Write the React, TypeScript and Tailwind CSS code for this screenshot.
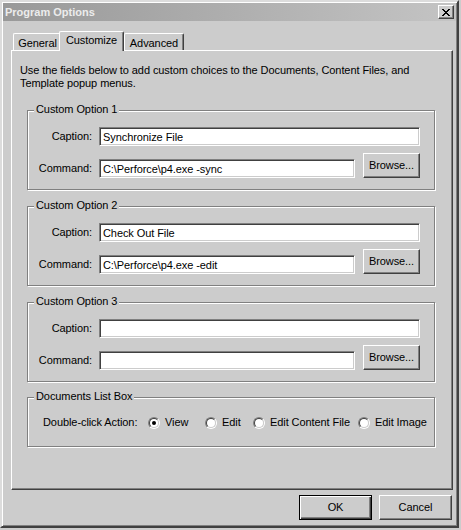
import type { ReactNode } from 'react';

// Win2k 3D edges, grayscale
const raised = 'border border-t-white border-l-white border-r-[#404040] border-b-[#404040] shadow-[inset_-1px_-1px_0_#808080]';
const sunken = 'border border-t-[#808080] border-l-[#808080] border-r-white border-b-white shadow-[inset_1px_1px_0_#404040,inset_-1px_-1px_0_#cccccc]';

function Field({ width, value = '' }: { width: string; value?: string }) {
  return (
    <input
      readOnly
      defaultValue={value}
      className={`${width} h-[19px] ${sunken} bg-white pl-[3px] text-[11px] leading-[13px] tracking-[-0.08px] text-black outline-none`}
    />
  );
}

function Group({ title, className = '', children }: { title: string; className?: string; children: ReactNode }) {
  return (
    <div className={`relative ml-[7px] w-[408px] border border-[#808080] shadow-[1px_1px_0_#fff,inset_1px_1px_0_#fff] ${className}`}>
      <span className="absolute left-[6px] top-[-8px] bg-[#cccccc] px-[2px] leading-[13px]">{title}</span>
      {children}
    </div>
  );
}

function CustomOption({ n, caption = '', command = '', className = '' }: { n: number; caption?: string; command?: string; className?: string }) {
  return (
    <Group title={`Custom Option ${n}`} className={`pt-[16px] pb-[11px] ${className}`}>
      <div className="flex h-[19px] items-center">
        <span className="mr-[7px] w-[64px] text-right">Caption:</span>
        <Field width="w-[321px]" value={caption} />
      </div>
      <div className="mt-[7px] flex h-[25px] items-end">
        <div className="flex h-[19px] items-center">
          <span className="mr-[7px] w-[64px] text-right">Command:</span>
          <Field width="w-[256px]" value={command} />
        </div>
        <button className={`ml-[8px] h-[25px] w-[57px] ${raised} bg-[#cccccc] text-[11px]`}>Browse...</button>
      </div>
    </Group>
  );
}

function Radio({ label, checked = false, width }: { label: string; checked?: boolean; width: string }) {
  return (
    <div className={`flex ${width} shrink-0 items-center gap-[5px]`}>
      <div className="flex h-[12px] w-[12px] shrink-0 rounded-full border border-t-[#808080] border-l-[#808080] border-r-white border-b-white">
        <div className="flex flex-1 items-center justify-center rounded-full border border-t-[#404040] border-l-[#404040] border-r-[#cccccc] border-b-[#cccccc] bg-white">
          {checked && <div className="h-[4px] w-[4px] rounded-full bg-black" />}
        </div>
      </div>
      <span>{label}</span>
    </div>
  );
}

export default function App() {
  return (
    <div className="h-[530px] w-[461px] whitespace-nowrap bg-[#cccccc] font-['Liberation_Sans',Arial,sans-serif] text-[11px] leading-[13px] tracking-[-0.08px] text-black">
      <div className="h-[528px] w-[459px] border-2 border-t-[#dcdcdc] border-l-[#dcdcdc] border-r-[#404040] border-b-[#404040] shadow-[inset_1px_1px_0_#fff,inset_-1px_-1px_0_#808080]">
        {/* title bar */}
        <div className="mx-[1px] mt-[1px] flex h-[18px] items-center justify-between bg-gradient-to-r from-[#999999] to-[#c4c4c4] pl-[2px] pr-[2px]">
          <span className="mt-[1px] font-bold tracking-normal text-[#ececec]">Program Options</span>
          <button className={`flex h-[14px] w-[16px] items-center justify-center ${raised} bg-[#cccccc]`}>
            <svg width="8" height="7" viewBox="0 0 8 7" shapeRendering="crispEdges">
              <path d="M0 0h2l2 2.5L6 0h2L5 3.5 8 7H6L4 4.5 2 7H0l3-3.5z" fill="#000" />
            </svg>
          </button>
        </div>

        <div className="ml-[9px] mt-[10px] w-[442px]">
          {/* tabs */}
          <div className="flex h-[19px] items-end pl-[2px]">
            <div className="h-[17px] w-[48px] rounded-tl-[2px] border-l border-t border-white pt-[3px] text-center">General</div>
            <div className="relative z-10 -mb-px ml-[-2px] h-[20px] w-[65px] rounded-t-[2px] border-l border-t border-r border-white border-r-[#404040] bg-[#cccccc] pt-[2px] text-center shadow-[inset_-1px_0_0_#808080]">
              Customize
            </div>
            <div className="h-[17px] w-[60px] rounded-t-[2px] border-l border-t border-r border-white border-r-[#404040] pt-[3px] text-center shadow-[inset_-1px_0_0_#808080]">
              Advanced
            </div>
          </div>

          {/* panel */}
          <div className={`h-[440px] ${raised} pl-[8px] pt-[13px]`}>
            <p>
              Use the fields below to add custom choices to the Documents, Content Files, and
              <br />
              Template popup menus.
            </p>

            <CustomOption n={1} caption="Synchronize File" command="C:\Perforce\p4.exe -sync" className="mt-[20px]" />
            <CustomOption n={2} caption="Check Out File" command="C:\Perforce\p4.exe -edit" className="mt-[16px]" />
            <CustomOption n={3} className="mt-[16px]" />

            <Group title="Documents List Box" className="mt-[15px] h-[50px] pl-[15px] pt-[18px]">
              <div className="flex items-center">
                <span className="w-[105px] shrink-0">Double-click Action:</span>
                <Radio label="View" checked width="w-[57px]" />
                <Radio label="Edit" width="w-[48px]" />
                <Radio label="Edit Content File" width="w-[105px]" />
                <Radio label="Edit Image" width="w-[66px]" />
              </div>
            </Group>
          </div>

          {/* buttons */}
          <div className="mt-[5px] flex justify-end gap-[7px] pr-[1px]">
            <button className="h-[25px] w-[73px] border border-black bg-[#cccccc] shadow-[inset_1px_1px_0_#fff,inset_-1px_-1px_0_#404040,inset_-2px_-2px_0_#808080]">
              OK
            </button>
            <button className={`h-[25px] w-[73px] ${raised} bg-[#cccccc]`}>Cancel</button>
          </div>
        </div>
      </div>
    </div>
  );
}
